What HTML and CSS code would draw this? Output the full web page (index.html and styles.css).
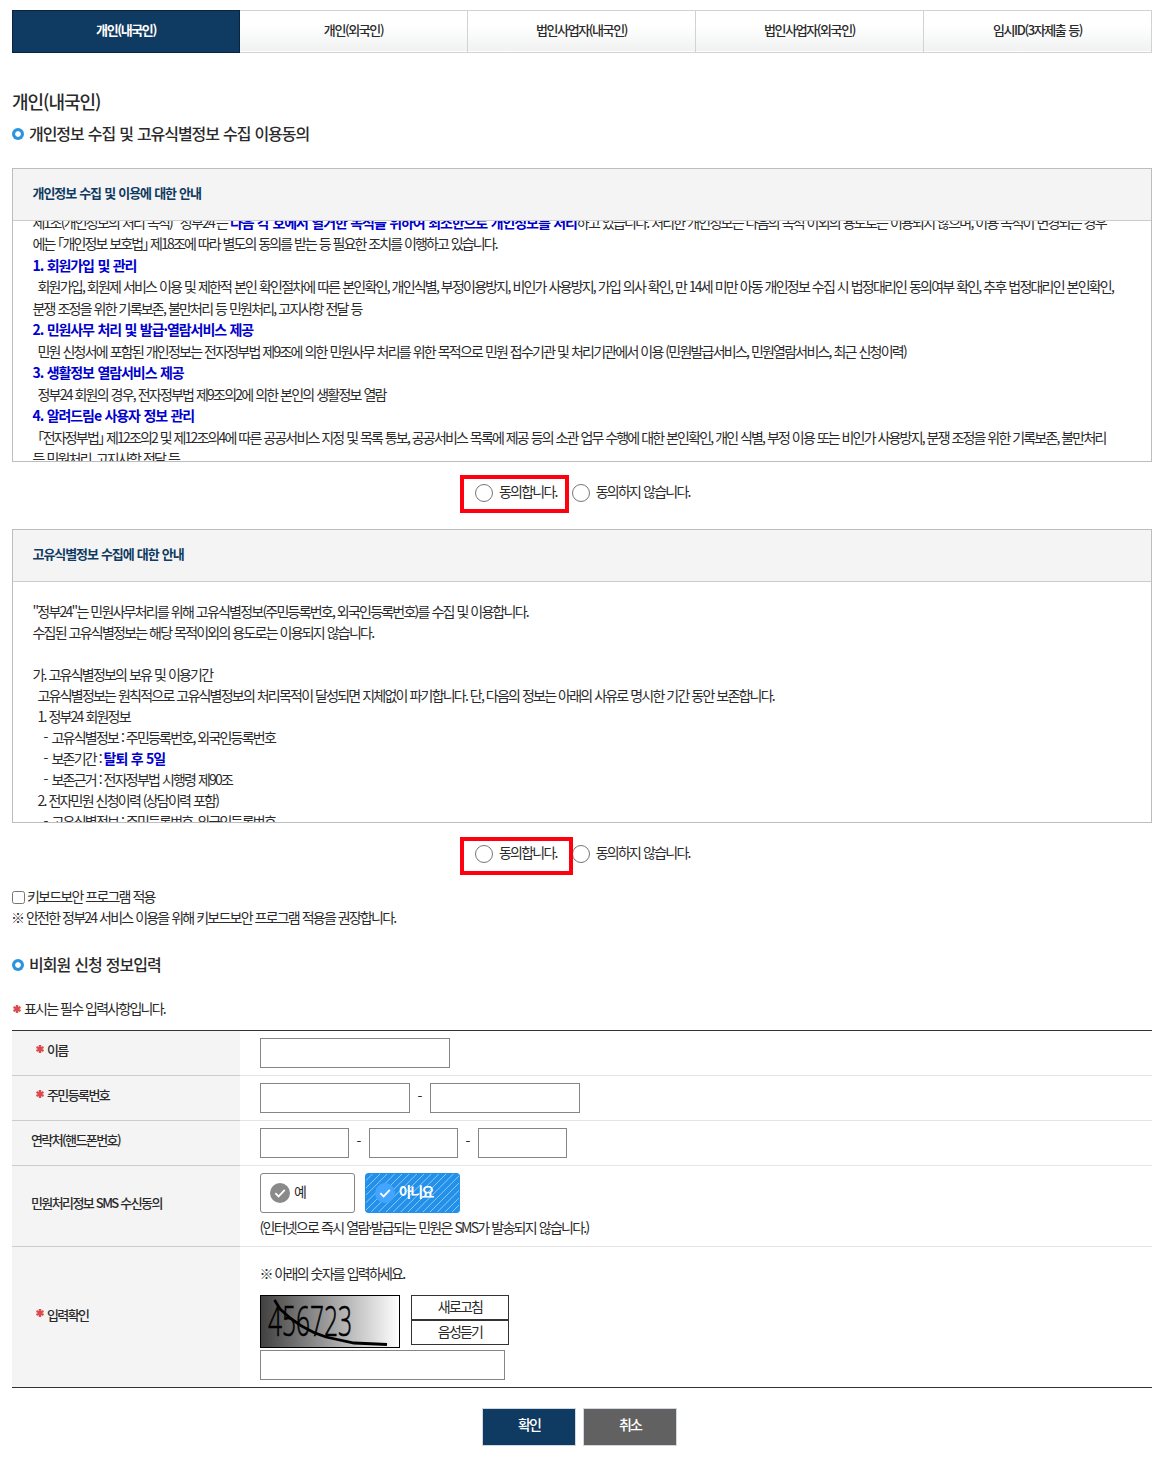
FILE: index.html
```html
<!DOCTYPE html>
<html lang="ko">
<head>
<meta charset="utf-8">
<title>비회원 신청</title>
<link rel="stylesheet" href="styles.css">
</head>
<body>
<nav class="tabs">
  <a class="tab active">개인(내국인)</a>
  <a class="tab">개인(외국인)</a>
  <a class="tab">법인사업자(내국인)</a>
  <a class="tab">법인사업자(외국인)</a>
  <a class="tab">임시ID(3자제출 등)</a>
</nav>

<h1>개인(내국인)</h1>
<h2><i class="ring"></i>개인정보 수집 및 고유식별정보 수집 이용동의</h2>

<section class="panel privacy">
  <h3>개인정보 수집 및 이용에 대한 안내</h3>
  <div class="terms">
    <p>제1조(개인정보의 처리 목적)&nbsp; '정부24'는 <b>다음 각 호에서 열거한 목적을 위하여 최소한으로 개인정보를 처리</b>하고 있습니다. 처리한 개인정보는 다음의 목적 이외의 용도로는 이용되지 않으며, 이용 목적이 변경되는 경우</p>
    <p class="tight">에는 <span class="half">「</span>개인정보 보호법<span class="half">」</span> 제18조에 따라 별도의 동의를 받는 등 필요한 조치를 이행하고 있습니다.</p>
    <p><b>1. 회원가입 및 관리</b></p>
    <p class="in1">회원가입, 회원제 서비스 이용 및 제한적 본인 확인절차에 따른 본인확인, 개인식별, 부정이용방지, 비인가 사용방지, 가입 의사 확인, 만 14세 미만 아동 개인정보 수집 시 법정대리인 동의여부 확인, 추후 법정대리인 본인확인,</p>
    <p>분쟁 조정을 위한 기록보존, 불만처리 등 민원처리, 고지사항 전달 등</p>
    <p><b>2. 민원사무 처리 및 발급·열람서비스 제공</b></p>
    <p class="in1">민원 신청서에 포함된 개인정보는 전자정부법 제9조에 의한 민원사무 처리를 위한 목적으로 민원 접수기관 및 처리기관에서 이용 (민원발급서비스, 민원열람서비스, 최근 신청이력)</p>
    <p><b>3. 생활정보 열람서비스 제공</b></p>
    <p class="in1">정부24 회원의 경우, 전자정부법 제9조의2에 의한 본인의 생활정보 열람</p>
    <p><b>4. 알려드림e 사용자 정보 관리</b></p>
    <p class="in1 law"><span class="half">「</span>전자정부법<span class="half">」</span> 제12조의2 및 제12조의4에 따른 공공서비스 지정 및 목록 통보, 공공서비스 목록에 제공 등의 소관 업무 수행에 대한 본인확인, 개인 식별, 부정 이용 또는 비인가 사용방지, 분쟁 조정을 위한 기록보존, 불만처리</p>
    <p>등 민원처리, 고지사항 전달 등</p>
  </div>
</section>
<div class="agree">
  <span class="mark"></span>
  <label><i class="radio"></i>동의합니다.</label>
  <label><i class="radio"></i>동의하지 않습니다.</label>
</div>

<section class="panel unique">
  <h3>고유식별정보 수집에 대한 안내</h3>
  <div class="terms">
    <p>"정부24"는 민원사무처리를 위해 고유식별정보(주민등록번호, 외국인등록번호)를 수집 및 이용합니다.</p>
    <p>수집된 고유식별정보는 해당 목적이외의 용도로는 이용되지 않습니다.</p>
    <p>&nbsp;</p>
    <p>가. 고유식별정보의 보유 및 이용기간</p>
    <p class="in1">고유식별정보는 원칙적으로 고유식별정보의 처리목적이 달성되면 지체없이 파기합니다. 단, 다음의 정보는 아래의 사유로 명시한 기간 동안 보존합니다.</p>
    <p class="in1">1. 정부24 회원정보</p>
    <p class="in2"><span class="dash">-</span>고유식별정보 : 주민등록번호, 외국인등록번호</p>
    <p class="in2"><span class="dash">-</span>보존기간 : <b>탈퇴 후 5일</b></p>
    <p class="in2"><span class="dash">-</span>보존근거 : 전자정부법 시행령 제90조</p>
    <p class="in1">2. 전자민원 신청이력 (상담이력 포함)</p>
    <p class="in2"><span class="dash">-</span>고유식별정보 : 주민등록번호, 외국인등록번호</p>
  </div>
</section>
<div class="agree second">
  <span class="mark"></span>
  <label><i class="radio"></i>동의합니다.</label>
  <label><i class="radio"></i>동의하지 않습니다.</label>
</div>

<div class="keyboard">
  <label><i class="check"></i>키보드보안 프로그램 적용</label>
  <p>※ 안전한 정부24 서비스 이용을 위해 키보드보안 프로그램 적용을 권장합니다.</p>
</div>

<h2 class="form-title"><i class="ring"></i>비회원 신청 정보입력</h2>
<p class="required"><svg class="star" viewBox="0 0 8 8"><path d="M4 0v8M.5 2l7 4M7.5 2l-7 4"/></svg>표시는 필수 입력사항입니다.</p>

<div class="form">
  <div class="row">
    <div class="name req"><svg class="star" viewBox="0 0 8 8"><path d="M4 0v8M.5 2l7 4M7.5 2l-7 4"/></svg>이름</div>
    <div class="field"><span class="box w190"></span></div>
  </div>
  <div class="row">
    <div class="name req"><svg class="star" viewBox="0 0 8 8"><path d="M4 0v8M.5 2l7 4M7.5 2l-7 4"/></svg>주민등록번호</div>
    <div class="field"><span class="box w150"></span><span class="sep">-</span><span class="box w150"></span></div>
  </div>
  <div class="row">
    <div class="name">연락처(핸드폰번호)</div>
    <div class="field"><span class="box w89"></span><span class="sep">-</span><span class="box w89"></span><span class="sep">-</span><span class="box w89"></span></div>
  </div>
  <div class="row sms">
    <div class="name">민원처리정보 SMS 수신동의</div>
    <div class="field">
      <div class="choices">
        <span class="choice"><svg viewBox="0 0 20 20"><circle cx="10" cy="10" r="10"/><path d="M5.3 10.2l3.3 3.2 6.2-6.500"/></svg>예</span>
        <span class="choice on"><svg viewBox="0 0 20 20"><circle cx="10" cy="10" r="10"/><path d="M5.3 10.2l3.3 3.2 6.2-6.500"/></svg>아니요</span>
      </div>
      <p>(인터넷으로 즉시 열람·발급되는 민원은 SMS가 발송되지 않습니다.)</p>
    </div>
  </div>
  <div class="row verify">
    <div class="name req"><svg class="star" viewBox="0 0 8 8"><path d="M4 0v8M.5 2l7 4M7.5 2l-7 4"/></svg>입력확인</div>
    <div class="field">
      <p>※ 아래의 숫자를 입력하세요.</p>
      <div class="captcha-line">
        <svg class="captcha" viewBox="0 0 140 53">
          <defs><linearGradient id="fade"><stop offset="0" stop-color="#404040"/><stop offset="1" stop-color="#fff"/></linearGradient></defs>
          <rect x=".5" y=".5" width="139" height="52" fill="url(#fade)" stroke="#000"/>
          <text x="8" y="41" textLength="84" lengthAdjust="spacingAndGlyphs">456723</text>
          <path d="M14.500 5L20 14Q40 34 66 42L94 48L127 49.500"/>
        </svg>
        <div class="tools"><span>새로고침</span><span>음성듣기</span></div>
      </div>
      <span class="box w245"></span>
    </div>
  </div>
</div>

<div class="actions"><span class="btn ok">확인</span><span class="btn cancel">취소</span></div>
</body>
</html>
```
FILE: styles.css
```css
* { box-sizing: border-box; }
body {
  margin: 0;
  padding: 10px 14px 0 12px;
  background: #fff;
  color: #2a2a2a;
  font: 14px/21px "Noto Sans CJK KR", sans-serif;
  letter-spacing: -1.78px;
  word-spacing: .65px;
  white-space: nowrap;
}
h1, h2, h3, p { margin: 0; }

.tabs {
  display: grid;
  grid-template-columns: repeat(5, 228px);
  height: 43px;
  border: solid #d2d2d2;
  border-width: 1px 0;
}
.tab {
  padding-top: 8px;
  text-align: center;
  font-size: 13px;
  font-weight: 500;
  letter-spacing: -1.4px;
  border-right: 1px solid #d2d2d2;
  background: linear-gradient(#fff 35%, #f0f1f1);
  box-shadow: inset 0 -1px #fff;
}
.tab.active {
  margin: -1px 0;
  background: #0f3a61;
  border: 1px solid #0a2440;
  box-shadow: none;
  color: #fff;
  font-weight: 700;
}

h1 {
  margin-top: 34px;
  font-size: 18px;
  line-height: 28px;
  font-weight: 500;
  letter-spacing: -1.05px;
}
h2 {
  display: flex;
  align-items: center;
  gap: 5px;
  margin-top: 7px;
  font-size: 16px;
  line-height: 23px;
  padding-bottom: 1px;
  font-weight: 500;
  letter-spacing: -1.050px;
}
.ring {
  width: 12px;
  height: 12px;
  margin-top: 1px;
  border-radius: 50%;
  background: radial-gradient(circle, #fff 2.400px, #2b93e0 3.200px);
}

.panel { height: 294px; border: 1px solid #bdbdbd; overflow: hidden; }
.privacy { margin-top: 22px; }
.panel h3 {
  height: 52px;
  padding: 13px 19.500px 0;
  border-bottom: 1px solid #ccc;
  background: #f4f4f4;
  color: #0f3a61;
  font-size: 13px;
  line-height: 22px;
  font-weight: 700;
  letter-spacing: -1.080px;
}
.terms { height: 240px; padding: 0 19.500px; overflow: hidden; }
.privacy .terms { display: flex; flex-direction: column; line-height: 21.450px; }
.privacy .terms p:first-child { margin-top: -9px; }
.privacy .terms b { display: inline-block; margin-top: -1px; }
.privacy .terms p:first-child b { margin-top: 0; }
.unique .terms { padding-top: 18.500px; line-height: 21.100px; }
.terms b { color: #0000cd; font-weight: 700; letter-spacing: -1.070px; }
.tight { letter-spacing: -1.860px; }
.law { letter-spacing: -1.820px; }
.half { font-feature-settings: "halt"; }
.in1 { padding-left: 5px; }
.in2 { padding-left: 11px; }
.dash { display: inline-block; width: 8px; }

.agree { position: relative; display: flex; height: 67px; padding: 20px 0 0 463px; gap: 15px; }
.agree label { display: flex; height: 22px; line-height: 18px; letter-spacing: -1.760px; }
.radio { width: 18px; height: 18px; margin: 2px 6px 0 0; border: 1px solid #767676; border-radius: 50%; }
.mark { position: absolute; left: 448px; top: 13px; width: 109px; height: 38px; border: 4px solid #ff0010; }
.second { height: 63px; }
.second .mark { top: 14px; width: 113px; }

.keyboard label { display: flex; }
.check { width: 13px; height: 13px; margin: 5px 2px 0 0; border: 1px solid #767676; border-radius: 2.500px; }
.keyboard p { margin-left: -1px; }
.form-title { margin-top: 25px; letter-spacing: -1px; }
.star { width: 8px; height: 8px; stroke: #dc4a4e; stroke-width: 2.400; fill: none; }
.required { display: flex; align-items: center; gap: 3px; margin-top: 21px; padding-left: 1px; }
.required .star { margin-top: 1px; }

.form { margin-top: 11px; border-top: 1px solid #333; border-bottom: 1px solid #333; }
.row { display: flex; height: 45px; border-bottom: 1px solid #e5e5e5; }
.row:last-child { border-bottom: 0; }
.name {
  display: flex;
  align-items: center;
  width: 228px;
  margin-bottom: -1px;
  padding: 0 0 7px 19px;
  background: #f4f4f4;
  border-bottom: 1px solid #ccc;
  font-size: 13px;
  font-weight: 500;
  letter-spacing: -1.600px;
}
.row:last-child .name { margin: 0; border: 0; padding-bottom: 6px; }
.name.req { padding-left: 24px; gap: 3px; }
.name .star { margin-top: -2px; }
.field { padding: 7px 0 0 20px; }
.field p { margin-left: -.5px; }
.row:nth-child(-n+3) .field { display: flex; }
.box { display: block; height: 30px; border: 1px solid #858585; background: #fff; }
.w190 { width: 190px; }
.w150 { width: 150px; }
.w89 { width: 89px; }
.w245 { width: 245px; }
.sep { width: 20px; line-height: 26px; text-align: center; letter-spacing: 0; }
.sms { height: 81px; }
.choices { display: flex; gap: 10px; height: 40px; }
.choice {
  display: flex;
  width: 95px;
  padding: 7px 0 0 9px;
  gap: 4px;
  border: 1px solid #858585;
  border-radius: 3px;
}
.choice svg { width: 20px; height: 20px; margin-top: 2px; fill: #8a8a8a; }
.choice path { fill: none; stroke: #fff; stroke-width: 1.800; }
.choice.on {
  border-color: #2391ea;
  background: repeating-linear-gradient(135deg, #2391ea 0 4px, #8cc8f7 4.500px 4.700px, #2391ea 5.200px);
  color: #fff;
  font-weight: 700;
  letter-spacing: -1.600px;
}
.choice.on svg { fill: #43a5ff; }
.sms p { margin-top: 4px; letter-spacing: -1.730px; }
.verify { height: 140px; }
.verify .field { padding-top: 16px; }
.captcha-line { display: flex; gap: 11px; margin-top: 11px; height: 55px; }
.captcha { width: 140px; height: 53px; }
.captcha text {
  font: 300 43px "Open Sans", sans-serif;
  letter-spacing: 0;
  fill: #000;
  stroke: #000;
  stroke-width: .7;
}
.captcha path { fill: none; stroke: #000; stroke-width: 2.800; }
.tools span {
  display: block;
  width: 98px;
  height: 25px;
  border: 1px solid #333;
  text-align: center;
  line-height: 20px;
}

.actions { display: flex; gap: 7px; margin: 20px 0 0 470px; }
.btn {
  width: 94px;
  height: 38px;
  border: 1px solid #d0d7de;
  color: #fff;
  text-align: center;
  line-height: 31px;
  font-weight: 500;
}
.ok { background: #0f3a61; }
.cancel { background: #616161; }
```
